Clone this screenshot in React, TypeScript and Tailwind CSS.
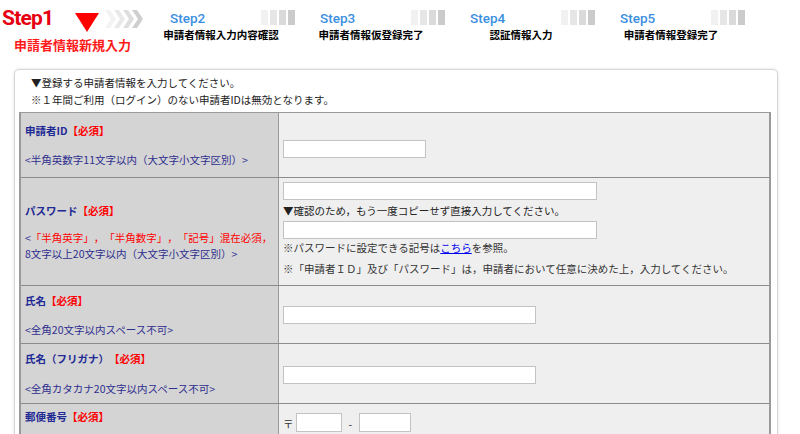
import React from 'react';

const jp = { fontFamily: '"Noto Sans CJK JP", "Noto Sans", sans-serif' };

const steps = [
  { label: 'Step2', text: '申請者情報入力内容確認' },
  { label: 'Step3', text: '申請者情報仮登録完了' },
  { label: 'Step4', text: '認証情報入力' },
  { label: 'Step5', text: '申請者情報登録完了' },
];

const Bars = () => (
  <div className="flex gap-[2px]">
    <div className="w-[7px] h-[15px] bg-[#f1f1f1]" />
    <div className="w-[7px] h-[15px] bg-[#e6e6e6]" />
    <div className="w-[7px] h-[15px] bg-[#dadada]" />
    <div className="w-[7px] h-[15px] bg-[#cbcbcb]" />
  </div>
);

const Req = () => <span className="text-[#ff0000]">【必須】</span>;

const Input = ({ w, h = 18 }: { w: number; h?: number }) => (
  <input
    type="text"
    className="block bg-white border border-[#c3c3c3] outline-none"
    style={{ width: w, height: h }}
  />
);

const LabelCell = ({ children }: { children: React.ReactNode }) => (
  <div className="w-[258px] shrink-0 bg-[#d4d4d4] border-r border-[#9a9a9a] flex flex-col justify-center pl-[4px]">
    {children}
  </div>
);

export default function App() {
  return (
    <div
      className="w-[800px] h-[434px] overflow-hidden bg-white text-[10.5px] text-[#222] [text-spacing-trim:space-all]"
      style={jp}
    >
      {/* steps header */}
      <div className="flex h-[69px]">
        <div className="w-[164px] shrink-0">
          <div className="flex items-start pt-[5px]">
            <span className="ml-[2px] text-[21px] leading-[26px] font-bold tracking-[-0.8px] text-[#e60012]" style={{ fontFamily: 'Roboto, sans-serif' }}>
              Step1
            </span>
            <svg width="24" height="19" viewBox="0 0 24 19" className="ml-[22px] mt-[8px]">
              <polygon points="0,0 24,0 12,19" fill="#ff0000" />
            </svg>
            <svg width="40" height="18" viewBox="0 0 40 18" className="ml-[6px] mt-[5px]">
              <polygon points="0,0 5,0 11,9 5,18 0,18 6,9" fill="#f3f3f3" />
              <polygon points="9,0 14,0 20,9 14,18 9,18 15,9" fill="#e9e9e9" />
              <polygon points="18,0 23,0 29,9 23,18 18,18 24,9" fill="#dedede" />
              <polygon points="27,0 32,0 38,9 32,18 27,18 33,9" fill="#cfcfcf" />
            </svg>
          </div>
          <div className="ml-[14px] mt-[5px] text-[13px] leading-[16px] font-bold text-[#ff1a1a]">申請者情報新規入力</div>
        </div>
        {steps.map((s) => (
          <div key={s.label} className="w-[150px] shrink-0 pt-[10px]">
            <div className="flex items-start pr-[19px]">
              <span className="ml-[6px] text-[13.5px] leading-[16px] font-medium text-[#3b8fdf]" style={{ fontFamily: 'Roboto, sans-serif' }}>
                {s.label}
              </span>
              <div className="ml-auto">
                <Bars />
              </div>
            </div>
            <div className="w-[114px] mt-[2px] flex justify-center">
              <span className="whitespace-nowrap font-bold text-black leading-[14px]">{s.text}</span>
            </div>
          </div>
        ))}
      </div>

      {/* form box */}
      <div className="ml-[14px] w-[764px] h-[400px] border border-[#d6d6d6] rounded-[5px] shadow-[0_0_3px_rgba(0,0,0,0.12)] pl-[4px] pr-[6px] pt-[4px]">
        <div className="pl-[12px] leading-[17px] text-[#222]">
          <div>▼登録する申請者情報を入力してください。</div>
          <div>※１年間ご利用（ログイン）のない申請者IDは無効となります。</div>
        </div>

        <div className="mt-[4px] w-[752px] border-t border-l-2 border-r-2 border-[#9a9a9a] leading-[17px]">
          {/* 申請者ID */}
          <div className="flex h-[65px] border-b border-[#8c8c8c]">
            <LabelCell>
              <div className="font-bold text-[#1f2a94]">
                申請者ID<Req />
              </div>
              <div className="mt-[12px] text-[#2e2e8f]">&lt;半角英数字11文字以内（大文字小文字区別）&gt;</div>
            </LabelCell>
            <div className="flex-1 bg-[#efefef] flex items-center pl-[4px] pt-[7px]">
              <Input w={143} />
            </div>
          </div>

          {/* パスワード */}
          <div className="flex h-[108px] border-b border-[#8c8c8c]">
            <LabelCell>
              <div className="font-bold text-[#1f2a94]">
                パスワード<Req />
              </div>
              <div className="mt-[11px] leading-[16px]">
                <div className="whitespace-nowrap">
                  <span className="text-[#2e2e8f]">&lt;</span>
                  <span className="text-[#ff0000]">「半角英字」，「半角数字」，「記号」混在必須，</span>
                </div>
                <div className="text-[#2e2e8f]">8文字以上20文字以内（大文字小文字区別）&gt;</div>
              </div>
            </LabelCell>
            <div className="flex-1 bg-[#efefef] pl-[4px] pt-[4px]">
              <Input w={314} />
              <div className="mt-[1px] leading-[19px]">▼確認のため，もう一度コピーせず直接入力してください。</div>
              <div className="mt-[1px]">
                <Input w={314} />
              </div>
              <div className="leading-[17px] text-[#333]">
                ※パスワードに設定できる記号は<span className="text-[#0000ee] underline">こちら</span>を参照。
              </div>
              <div className="mt-[4px] leading-[17px] text-[#333]">
                ※「申請者ＩＤ」及び「パスワード」は，申請者において任意に決めた上，入力してください。
              </div>
            </div>
          </div>

          {/* 氏名 */}
          <div className="flex h-[58px] border-b border-[#8c8c8c]">
            <LabelCell>
              <div className="font-bold text-[#1f2a94]">
                氏名<Req />
              </div>
              <div className="mt-[12px] text-[#2e2e8f]">&lt;全角20文字以内スペース不可&gt;</div>
            </LabelCell>
            <div className="flex-1 bg-[#efefef] flex items-center pl-[4px]">
              <Input w={253} />
            </div>
          </div>

          {/* 氏名（フリガナ） */}
          <div className="flex h-[60px] border-b border-[#8c8c8c]">
            <LabelCell>
              <div className="font-bold text-[#1f2a94]">
                氏名（フリガナ）<Req />
              </div>
              <div className="mt-[13px] text-[#2e2e8f]">&lt;全角カタカナ20文字以内スペース不可&gt;</div>
            </LabelCell>
            <div className="flex-1 bg-[#efefef] flex items-center pl-[4px] pt-[2px]">
              <Input w={253} />
            </div>
          </div>

          {/* 郵便番号 */}
          <div className="flex h-[60px]">
            <div className="w-[258px] shrink-0 bg-[#d4d4d4] border-r border-[#9a9a9a] pl-[4px] pt-[4px]">
              <div className="font-bold text-[#1f2a94]">
                郵便番号<Req />
              </div>
            </div>
            <div className="flex-1 bg-[#efefef] flex items-start pl-[4px] pt-[9px]">
              <span className="mt-[2px] text-[#333]">〒</span>
              <div className="ml-[2px]">
                <Input w={46} h={19} />
              </div>
              <span className="mx-[7px] mt-[2px] text-[#333]">-</span>
              <Input w={52} h={19} />
            </div>
          </div>
        </div>
      </div>
    </div>
  );
}
